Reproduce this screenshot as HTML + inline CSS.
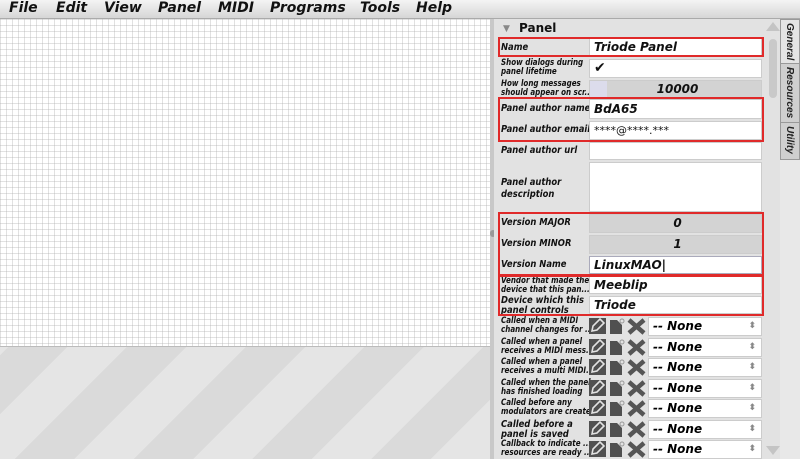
<!DOCTYPE html>
<html><head><meta charset="utf-8"><style>
*{margin:0;padding:0;box-sizing:border-box}
body{width:800px;height:459px;overflow:hidden;position:relative;background:#ddd;font-family:"DejaVu Sans","Liberation Sans",sans-serif;}
.menu{position:absolute;left:0;top:0;width:800px;height:19px;background:linear-gradient(#f4f4f4,#d6d6d6);border-bottom:1px solid #aaa;font-weight:bold;font-style:italic;font-size:14px;}
.menu span{position:absolute;top:0px;color:#111}
.canvas{position:absolute;left:0;top:19px;width:490px;height:328px;background-color:#fff;background-image:linear-gradient(to right,rgba(170,170,170,.35) 1px,transparent 1px),linear-gradient(to bottom,rgba(170,170,170,.35) 1px,transparent 1px);background-size:6px 6px;border-bottom:1px solid #bbb}
.stripes{position:absolute;left:0;top:347px;width:490px;height:112px;background:repeating-linear-gradient(-45deg,#e5e5e5 0 42px,#dadada 42px 84px)}
.div{position:absolute;left:490px;top:19px;width:4px;height:440px;background:#c8c8c8}
.dot{position:absolute;left:490px;top:230px;width:6px;height:7px;border-radius:3px;background:#999}
.panel{position:absolute;left:494px;top:19px;width:286px;height:440px;background:#e2e2e2}
.a{position:absolute}
.lab{position:absolute;left:501px;font-weight:bold;font-style:italic;color:#111;font-size:10px;line-height:10px;white-space:nowrap;transform:scaleX(.84);transform-origin:left top}
.val{position:absolute;left:589px;width:173px;background:#fff;border:1px solid #ccc;font-weight:bold;font-style:italic;font-size:12px;padding-left:4px;color:#111}
.red{position:absolute;left:498px;width:266px;border:2px solid #e02a2a}
.tab{position:absolute;left:780px;width:20px;border:1px solid #999;background:#cfcfcf;font-weight:bold;font-style:italic;font-size:9px;color:#222;overflow:hidden}
.tab span{position:absolute;left:3px;top:3px;writing-mode:vertical-rl;font-family:"Liberation Sans",sans-serif;font-size:10px}
.sel{position:absolute;left:648px;width:114px;height:19px;background:#fff;border:1px solid #ccc;font-weight:bold;font-style:italic;font-size:12px;padding-left:4px;line-height:17px}
.sel:after{content:"⬍";position:absolute;right:5px;top:0;font-size:9px;color:#888;font-style:normal}
.small{font-size:8.5px;line-height:9px}
</style></head><body>
<div class="menu">
<span style="left:9px">File</span><span style="left:56px">Edit</span><span style="left:104px">View</span><span style="left:158px">Panel</span><span style="left:218px">MIDI</span><span style="left:270px">Programs</span><span style="left:360px">Tools</span><span style="left:416px">Help</span>
</div>
<div class="canvas"></div><div class="stripes"></div>
<div class="div"></div><div class="dot"></div>
<div class="panel"></div>
<div class="a" style="left:503px;top:24px;font-size:9px;color:#888">▼</div>
<div class="a" style="left:519px;top:21px;font-weight:bold;font-size:12px;color:#111">Panel</div>
<div class="a" style="left:766px;top:22px;width:0;height:0;border-left:7px solid transparent;border-right:7px solid transparent;border-bottom:9px solid #c4c4c4"></div>
<div class="a" style="left:769px;top:39px;width:8px;height:59px;border-radius:4px;background:#c9c9c9"></div>
<div class="a" style="left:766px;top:446px;width:0;height:0;border-left:7px solid transparent;border-right:7px solid transparent;border-top:9px solid #c4c4c4"></div>
<div class="tab" style="top:19px;height:45px;background:#e4e4e4"><span>General</span></div>
<div class="tab" style="top:63px;height:60px"><span>Resources</span></div>
<div class="tab" style="top:122px;height:38px"><span>Utility</span></div>
<div class="a" style="left:780px;top:160px;width:20px;height:299px;background:#e8e8e8"></div>

<div class="lab" style="top:43px">Name</div>
<div class="val" style="top:38px;height:18px;line-height:16px">Triode Panel</div>
<div class="lab small" style="top:59px">Show dialogs during<br>panel lifetime</div>
<div class="val" style="top:59px;height:19px;font-size:14px;line-height:17px;font-style:normal">✔</div>
<div class="lab small" style="top:80px">How long messages<br>should appear on scr...</div>
<div class="val" style="top:80px;height:18px;background:#d3d3d3;text-align:center;line-height:16px"><span class="a" style="left:0;top:0;width:17px;height:16px;background:#dcdcec"></span>10000</div>
<div class="lab" style="top:104px">Panel author name</div>
<div class="val" style="top:99px;height:20px;line-height:18px">BdA65</div>
<div class="lab" style="top:125px">Panel author email</div>
<div class="val" style="top:121px;height:19px;line-height:17px;font-weight:normal;font-style:normal;font-size:11px">****@****.***</div>
<div class="lab" style="top:146px">Panel author url</div>
<div class="val" style="top:142px;height:18px"></div>
<div class="lab" style="top:177px;line-height:12px">Panel author<br>description</div>
<div class="val" style="top:162px;height:50px"></div>
<div class="lab" style="top:218px">Version MAJOR</div>
<div class="val" style="top:214px;height:19px;background:#d3d3d3;text-align:center;line-height:17px">0</div>
<div class="lab" style="top:239px">Version MINOR</div>
<div class="val" style="top:235px;height:19px;background:#d3d3d3;text-align:center;line-height:17px">1</div>
<div class="lab" style="top:260px">Version Name</div>
<div class="val" style="top:256px;height:18px;line-height:16px;border-color:#aab">LinuxMAO|</div>
<div class="lab small" style="top:277px">Vendor that made the<br>device that this pan...</div>
<div class="val" style="top:276px;height:18px;line-height:16px">Meeblip</div>
<div class="lab" style="top:296px;line-height:10px">Device which this<br>panel controls</div>
<div class="val" style="top:296px;height:18px;line-height:16px">Triode</div>
<div class="red" style="top:37px;height:20px"></div>
<div class="red" style="top:97px;height:45px"></div>
<div class="red" style="top:212px;height:64px"></div>
<div class="red" style="top:275px;height:41px"></div>

<div id="cb"></div>
<script>
var rows=[["Called when a MIDI","channel changes for ..."],["Called when a panel","receives a MIDI mess..."],["Called when a panel","receives a multi MIDI..."],["Called when the panel","has finished loading"],["Called before any","modulators are created"],["Called before a","panel is saved"],["Callback to indicate ...","resources are ready ..."]];
var h="";
for(var i=0;i<rows.length;i++){var y=316+i*20.5;
h+='<div class="lab" style="top:'+(y+1)+'px;font-size:'+(i==5?10:8.5)+'px;line-height:'+(i==5?10:9)+'px">'+rows[i][0]+'<br>'+rows[i][1]+'</div>';
h+='<svg class="a" style="left:589px;top:'+(y+1)+'px" width="58" height="18"><rect x="0" y="1" width="17" height="16" fill="#505050"/><path d="M3 14 L4 9 L11 2 L15 6 L8 13 Z" fill="none" stroke="#e2e2e2" stroke-width="1.6"/><path d="M21 3 L28 3 L33 8 L33 17 L21 17 Z" fill="#505050"/><circle cx="33" cy="4" r="2" fill="none" stroke="#999"/><path d="M40 3 L55 16 M55 3 L40 16" stroke="#555" stroke-width="4.5"/></svg>';
h+='<div class="sel" style="top:'+(y+1)+'px">-- None</div>';}
document.getElementById("cb").outerHTML=h;
</script>
</body></html>
